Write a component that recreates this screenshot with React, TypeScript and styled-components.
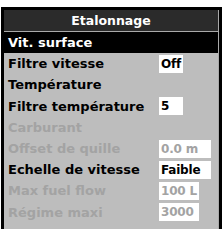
import styled, { createGlobalStyle } from 'styled-components'

type Row = {
  label: string
  value?: string
  width?: number
  disabled?: boolean
  selected?: boolean
}

const rows: Row[] = [
  { label: 'Vit. surface', selected: true },
  { label: 'Filtre vitesse', value: 'Off', width: 24 },
  { label: 'Température' },
  { label: 'Filtre température', value: '5', width: 24 },
  { label: 'Carburant', disabled: true },
  { label: 'Offset de quille', value: '0.0 m', width: 52, disabled: true },
  { label: 'Echelle de vitesse', value: 'Faible', width: 52 },
  { label: 'Max fuel flow', value: '100 L', width: 40, disabled: true },
  { label: 'Régime maxi', value: '3000', width: 40, disabled: true },
]

export default function App() {
  return (
    <>
      <GlobalStyle />
      <Screen>
        <Panel>
          <Title>Etalonnage</Title>
          <List>
            {rows.map((row) => (
              <Item key={row.label} $selected={row.selected}>
                <Label $disabled={row.disabled}>{row.label}</Label>
                {row.value && (
                  <Value $disabled={row.disabled} style={{ width: row.width }}>
                    {row.value}
                  </Value>
                )}
              </Item>
            ))}
          </List>
        </Panel>
      </Screen>
    </>
  )
}

const GlobalStyle = createGlobalStyle`
  html, body {
    margin: 0;
    padding: 0;
    background: #fff;
  }
`

const Screen = styled.div`
  width: 223px;
  height: 229px;
  padding: 7px 1px 0 1px;
  box-sizing: border-box;
  font-family: 'DejaVu Sans', Verdana, sans-serif;
  font-weight: bold;
`

const Panel = styled.div`
  height: 100%;
  box-sizing: border-box;
  border: 3px solid #000;
  border-bottom: none;
  background: #bdbdbd;
  display: flex;
  flex-direction: column;
`

const Title = styled.div`
  height: 21px;
  background: #2b2b2b;
  border-bottom: 1px solid #a9a9a9;
  border-right: 1px solid #a9a9a9;
  color: #fff;
  font-size: 12.5px;
  display: flex;
  align-items: center;
  justify-content: center;
`

const List = styled.div`
  flex: 1;
  display: flex;
  flex-direction: column;
  border-right: 1px solid #a9a9a9;
`

const Item = styled.div<{ $selected?: boolean }>`
  height: 21.2px;
  display: flex;
  align-items: center;
  padding-left: 4px;
  background: ${(p) => (p.$selected ? '#000' : 'transparent')};
  color: ${(p) => (p.$selected ? '#fff' : '#000')};
  font-size: 13px;
`

const Label = styled.div<{ $disabled?: boolean }>`
  width: 151px;
  color: ${(p) => (p.$disabled ? '#a3a3a3' : 'inherit')};
  white-space: nowrap;
`

const Value = styled.div<{ $disabled?: boolean }>`
  height: 18px;
  box-sizing: border-box;
  padding-left: 2px;
  background: #fff;
  color: ${(p) => (p.$disabled ? '#a3a3a3' : '#000')};
  font-size: 12px;
  letter-spacing: -0.2px;
  display: flex;
  align-items: center;
  white-space: nowrap;
`
